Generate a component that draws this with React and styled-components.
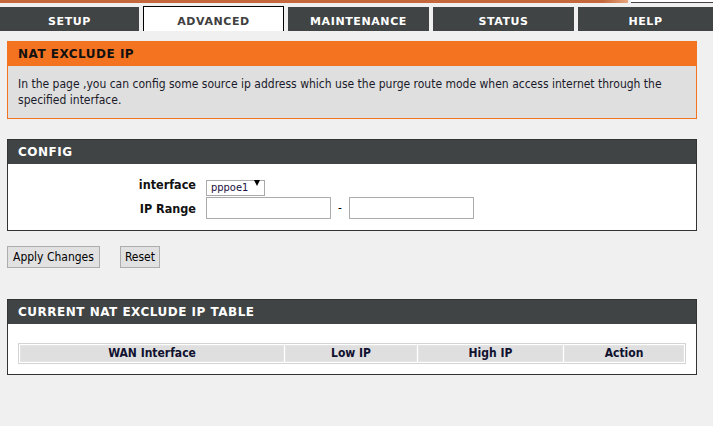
import React from 'react';
import styled, { createGlobalStyle } from 'styled-components';

const GlobalStyle = createGlobalStyle`
  body {
    margin: 0;
    background: #f0f0f0;
    font-family: "DejaVu Sans Condensed", "DejaVu Sans", sans-serif;
    color: #000;
  }
`;

const Page = styled.div`
  width: 713px;
  height: 426px;
  overflow: hidden;
`;

const TopStrip = styled.div`
  display: flex;
  height: 3px;
`;

const OrangeLine = styled.div`
  flex: 1;
  background: linear-gradient(to right, #c4683c 96%, #e8a57e);
`;

const WhiteLine = styled.div`
  width: 82px;
  margin-left: 3px;
  background: #fff;
  border-bottom: 1px solid #444;
`;

const TabBar = styled.div`
  display: flex;
  gap: 4px;
  margin-top: 4px;
  height: 24px;
`;

const Tab = styled.div`
  width: ${(p) => (p.$grow ? 'auto' : `${p.$w}px`)};
  flex: ${(p) => (p.$grow ? 1 : 'none')};
  height: ${(p) => (p.$active ? '25px' : '24px')};
  margin-top: ${(p) => (p.$active ? '-1px' : '0')};
  box-sizing: border-box;
  display: flex;
  align-items: center;
  justify-content: center;
  padding-top: ${(p) => (p.$active ? '5px' : '4px')};
  background: ${(p) => (p.$active ? '#fff' : '#404444')};
  border: ${(p) => (p.$active ? '1px solid #000' : 'none')};
  border-bottom: none;
  color: ${(p) => (p.$active ? '#404040' : '#fff')};
  font-family: "DejaVu Sans", sans-serif;
  font-size: 11px;
  font-weight: bold;
  letter-spacing: 0.6px;
`;

const Content = styled.div`
  width: 690px;
  margin: 10px 0 0 7px;
`;

const OrangeHead = styled.div`
  height: 25px;
  background: #f47321;
  display: flex;
  align-items: center;
  padding-left: 11px;
  font-family: "DejaVu Sans", sans-serif;
  font-size: 12px;
  font-weight: bold;
  letter-spacing: 0.5px;
  color: #111;
`;

const Info = styled.div`
  background: #dfdfdf;
  border: 1px solid #f47321;
  border-top: none;
  padding: 10px 10px 10px;
  font-size: 12px;
  line-height: 16px;
  color: #1a1a2a;
`;

const Box = styled.div`
  margin-top: ${(p) => p.$top}px;
  border: 1px solid #333;
  background: #fff;
`;

const DarkHead = styled.div`
  height: 24px;
  background: #404444;
  display: flex;
  align-items: center;
  padding-left: 10px;
  font-family: "DejaVu Sans", sans-serif;
  font-size: 12px;
  font-weight: bold;
  letter-spacing: 0.5px;
  color: #fff;
`;

const Form = styled.div`
  display: grid;
  grid-template-columns: 188px auto;
  column-gap: 10px;
  row-gap: 5px;
  align-items: center;
  padding: 12px 0 11px;
`;

const Label = styled.div`
  text-align: right;
  font-size: 12.5px;
  font-weight: bold;
  color: #111;
`;

const Controls = styled.div`
  display: flex;
  align-items: center;
`;

const SelectWrap = styled.div`
  position: relative;
  width: 59px;
  height: 16px;
`;

const Select = styled.select`
  appearance: none;
  width: 100%;
  height: 100%;
  box-sizing: border-box;
  border: 1px solid #aaa;
  background: #fff;
  padding: 0 0 0 4px;
  margin: 0;
  font-family: "DejaVu Sans Condensed", "DejaVu Sans", sans-serif;
  font-size: 11px;
  color: #201040;
  outline: none;
`;

const Arrow = styled.span`
  position: absolute;
  right: 5px;
  top: 4px;
  width: 0;
  height: 0;
  border-left: 3.5px solid transparent;
  border-right: 3.5px solid transparent;
  border-top: 6px solid #000;
  pointer-events: none;
`;

const Input = styled.input`
  width: 125px;
  height: 22px;
  box-sizing: border-box;
  border: 1px solid #aaa;
  margin: 0;
  padding: 0 3px;
  background: #fff;
`;

const Dash = styled.span`
  width: 18px;
  text-align: center;
  font-size: 12px;
`;

const Buttons = styled.div`
  display: flex;
  gap: 20px;
  height: 22px;
  margin-top: 15px;
`;

const Button = styled.button`
  height: 22px;
  padding: 0 ${(p) => p.$pad}px;
  margin: 0;
  border: 1px solid #adadad;
  background: #e1e1e1;
  font-family: "DejaVu Sans Condensed", "DejaVu Sans", sans-serif;
  font-size: 12px;
  color: #000;
`;

const TableWrap = styled.div`
  padding: 19px 10px 10px;
`;

const Table = styled.table`
  width: 100%;
  border: 1px solid #d4d4d4;
  border-spacing: 1px;
  background: #fff;
`;

const Th = styled.th`
  width: ${(p) => p.$w}px;
  height: 15px;
  padding: 0;
  background: #dfdfdf;
  border: 1px solid #e4e4e4;
  font-size: 12px;
  line-height: 13px;
  font-weight: bold;
  color: #111130;
  text-align: center;
`;

const tabs = [
  { name: 'SETUP', w: 139 },
  { name: 'ADVANCED', w: 141, active: true },
  { name: 'MAINTENANCE', w: 141 },
  { name: 'STATUS', w: 141 },
  { name: 'HELP', grow: true },
];

export default function App() {
  return (
    <Page>
      <GlobalStyle />
      <TopStrip>
        <OrangeLine />
        <WhiteLine />
      </TopStrip>
      <TabBar>
        {tabs.map((t) => (
          <Tab key={t.name} $w={t.w} $grow={t.grow} $active={t.active}>
            {t.name}
          </Tab>
        ))}
      </TabBar>
      <Content>
        <OrangeHead>NAT EXCLUDE IP</OrangeHead>
        <Info>
          In the page ,you can config some source ip address which use the purge route mode when access internet through the
          specified interface.
        </Info>

        <Box $top={20}>
          <DarkHead>CONFIG</DarkHead>
          <Form>
            <Label>interface</Label>
            <Controls>
              <SelectWrap>
                <Select defaultValue="pppoe1">
                  <option value="pppoe1">pppoe1</option>
                </Select>
                <Arrow />
              </SelectWrap>
            </Controls>
            <Label>IP Range</Label>
            <Controls>
              <Input />
              <Dash>-</Dash>
              <Input />
            </Controls>
          </Form>
        </Box>

        <Buttons>
          <Button $pad={5}>Apply Changes</Button>
          <Button $pad={4}>Reset</Button>
        </Buttons>

        <Box $top={31}>
          <DarkHead>CURRENT NAT EXCLUDE IP TABLE</DarkHead>
          <TableWrap>
            <Table>
              <thead>
                <tr>
                  <Th $w={262}>WAN Interface</Th>
                  <Th $w={130}>Low IP</Th>
                  <Th $w={143}>High IP</Th>
                  <Th>Action</Th>
                </tr>
              </thead>
            </Table>
          </TableWrap>
        </Box>
      </Content>
    </Page>
  );
}
